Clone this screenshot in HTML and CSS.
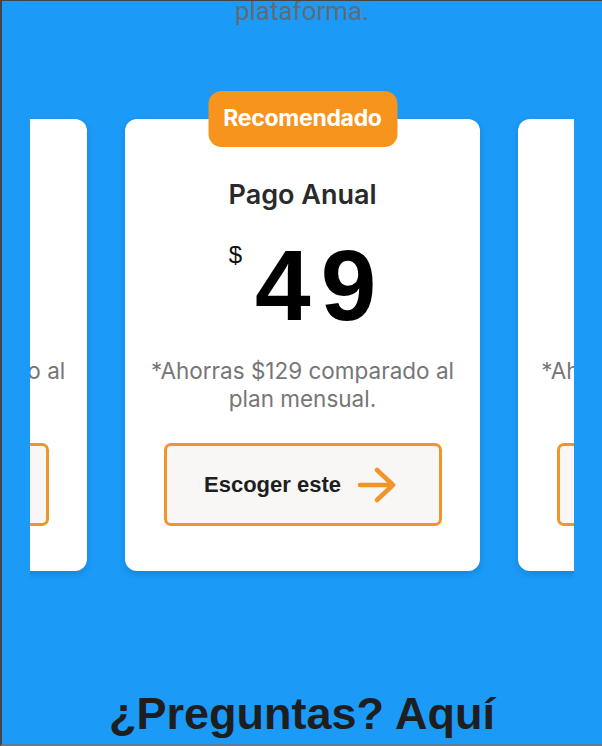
FILE: index.html
```html
<!DOCTYPE html>
<html lang="es">
<head>
<meta charset="utf-8">
<title>Planes</title>
<link rel="stylesheet" href="styles.css">
</head>
<body>
<div class="frame">
  <p class="intro">plataforma.</p>

  <section class="carousel">
    <div class="track">
      <article class="card">
        <h3 class="card-title">Pago Mensual</h3>
        <div class="price"><span class="currency">$</span><span class="amount">15</span></div>
        <p class="desc">*Pagarías $178 comparado al plan anual.</p>
        <button class="choose">
          <span>Escoger este</span>
          <svg class="arrow" viewBox="0 0 40 36" width="40" height="36" aria-hidden="true"><path d="M3 18 H36 M20 3 L36 18 L20 33" fill="none" stroke="#f0952a" stroke-width="4.5" stroke-linecap="round" stroke-linejoin="round"/></svg>
        </button>
      </article>

      <article class="card">
        <div class="badge">Recomendado</div>
        <h3 class="card-title">Pago Anual</h3>
        <div class="price"><span class="currency">$</span><span class="amount">49</span></div>
        <p class="desc">*Ahorras $129 comparado al plan mensual.</p>
        <button class="choose">
          <span>Escoger este</span>
          <svg class="arrow" viewBox="0 0 40 36" width="40" height="36" aria-hidden="true"><path d="M3 18 H36 M20 3 L36 18 L20 33" fill="none" stroke="#f0952a" stroke-width="4.5" stroke-linecap="round" stroke-linejoin="round"/></svg>
        </button>
      </article>

      <article class="card">
        <h3 class="card-title">Pago Vitalicio</h3>
        <div class="price"><span class="currency">$</span><span class="amount">99</span></div>
        <p class="desc">*Ahorras $300 comparado al plan mensual.</p>
        <button class="choose">
          <span>Escoger este</span>
          <svg class="arrow" viewBox="0 0 40 36" width="40" height="36" aria-hidden="true"><path d="M3 18 H36 M20 3 L36 18 L20 33" fill="none" stroke="#f0952a" stroke-width="4.5" stroke-linecap="round" stroke-linejoin="round"/></svg>
        </button>
      </article>
    </div>
  </section>

  <h2 class="faq">¿Preguntas? Aquí</h2>
</div>
</body>
</html>
```

FILE: styles.css
```css
html, body {
  margin: 0;
  padding: 0;
  height: 100%;
  overflow: hidden;
}

body {
  background: #1b9af7;
}

.frame {
  box-sizing: border-box;
  height: 746px;
  border-top: 1px solid #444;
  border-left: 2px solid #444;
  border-bottom: 2px solid #5c7d99;
  background: #1b9af7;
  overflow: hidden;
}

.intro {
  margin: -5px 0 0;
  text-align: center;
  font-family: Roboto, "Liberation Sans", sans-serif;
  font-size: 26px;
  line-height: 30px;
  color: #636b73;
}

.carousel {
  margin: 65px 0 0 28px;
  width: 544px;
  overflow: hidden;
  padding: 28px 0 8px;
}

.track {
  display: flex;
  gap: 38px;
  margin-left: -298px;
}

.card {
  position: relative;
  flex: 0 0 355px;
  box-sizing: border-box;
  background: #fff;
  border-radius: 12px;
  padding: 59px 0 45px;
  text-align: center;
  box-shadow: 0 3px 6px rgba(0, 40, 90, 0.18);
}

.badge {
  position: absolute;
  top: -28px;
  left: 50%;
  transform: translateX(-50%);
  width: 189px;
  height: 56px;
  box-sizing: border-box;
  padding-top: 13px;
  border-radius: 13px;
  background: #f7941d;
  color: #fff;
  font-family: Inter, "Liberation Sans", sans-serif;
  font-weight: 700;
  font-size: 23px;
  line-height: 28px;
  letter-spacing: -0.3px;
}

.card-title {
  margin: 0;
  font-family: Inter, "Liberation Sans", sans-serif;
  font-weight: 600;
  font-size: 27px;
  line-height: 33px;
  color: #2a2a2a;
}

.price {
  display: flex;
  justify-content: center;
  align-items: flex-start;
  margin-top: 24px;
  height: 100px;
}

.currency {
  margin-top: 8px;
  margin-right: 13px;
  font-family: "Liberation Sans", Arial, sans-serif;
  font-size: 24px;
  line-height: 24px;
  color: #111;
}

.amount {
  font-family: "Liberation Sans", Arial, sans-serif;
  font-weight: 700;
  font-size: 100px;
  line-height: 100px;
  letter-spacing: 10px;
  margin-right: -10px;
  color: #000;
}

.desc {
  margin: 22px 0 0;
  padding: 0 20px;
  font-family: Inter, "Liberation Sans", sans-serif;
  font-size: 22.5px;
  line-height: 28px;
  color: #767676;
}

.choose {
  display: flex;
  align-items: center;
  justify-content: center;
  gap: 16px;
  box-sizing: border-box;
  width: 278px;
  height: 83px;
  margin: 30px auto 0;
  border: 3px solid #f0952a;
  border-radius: 7px;
  background: #f9f7f5;
  font-family: "Liberation Sans", Arial, sans-serif;
  font-weight: 700;
  font-size: 22px;
  color: #1e1e1e;
  padding: 0 4px 0 0;
}

.arrow {
  display: block;
}

.faq {
  margin: 110px 0 0;
  text-align: center;
  font-family: "Liberation Sans", Arial, sans-serif;
  font-weight: 700;
  font-size: 45px;
  line-height: 50px;
  color: #1e1e1e;
}
```
